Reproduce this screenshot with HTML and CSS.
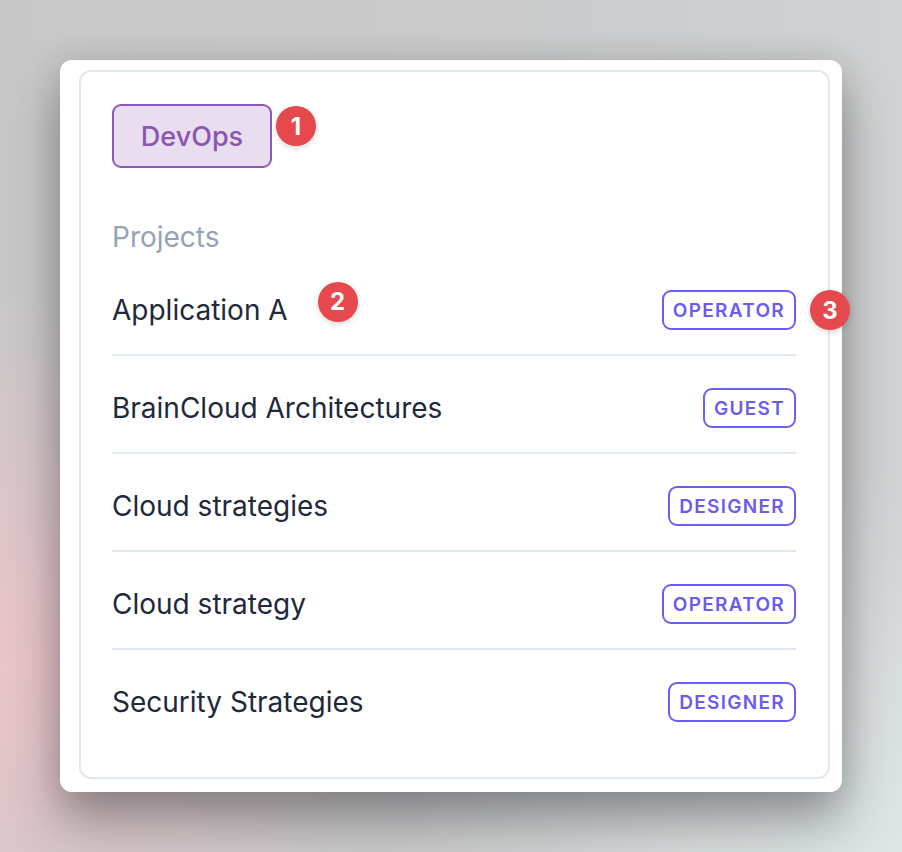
FILE: index.html
```html
<!DOCTYPE html>
<html>
<head>
<meta charset="utf-8">
<link rel="stylesheet" href="styles.css">
</head>
<body>
<div class="stage">
  <div class="card">
    <div class="panel">
      <div class="team-row">
        <span class="team">DevOps<span class="marker m1">1</span></span>
      </div>
      <div class="label">Projects</div>
      <ul class="list">
        <li class="row"><span class="name">Application A<span class="marker m2">2</span></span><span class="chip">OPERATOR<span class="marker m3">3</span></span></li>
        <li class="row"><span class="name">BrainCloud Architectures</span><span class="chip">GUEST</span></li>
        <li class="row"><span class="name">Cloud strategies</span><span class="chip">DESIGNER</span></li>
        <li class="row"><span class="name">Cloud strategy</span><span class="chip">OPERATOR</span></li>
        <li class="row"><span class="name">Security Strategies</span><span class="chip">DESIGNER</span></li>
      </ul>
    </div>
  </div>
</div>
</body>
</html>
```
FILE: styles.css
```css
* { box-sizing: border-box; }
html, body { margin: 0; height: 100%; }
body {
  font-family: Inter, "Noto Sans", sans-serif;
  background:
    radial-gradient(ellipse 420px 380px at 0% 78%, rgba(236,196,200,0.95), rgba(236,196,200,0) 100%),
    radial-gradient(ellipse 500px 380px at 100% 100%, rgba(222,230,229,1), rgba(222,230,229,0) 100%),
    linear-gradient(90deg, #c8c8c9 0%, #cacbcc 60%, #d0d2d3 100%);
  overflow: hidden;
}
.stage {
  padding: 60px 0 0 60px;
}
.card {
  width: 782px;
  height: 732px;
  background: #fff;
  border-radius: 12px;
  padding: 10px 12px 13px 19px;
  box-shadow: 0 28px 50px rgba(40,40,45,0.42), 0 0 30px rgba(40,40,45,0.12);
}
.panel {
  height: 100%;
  border: 2px solid #e2e8f0;
  border-radius: 12px;
  padding: 32px 32px 0 31px;
}
.team-row { display: flex; }
.team {
  position: relative;
  display: inline-flex;
  align-items: center;
  justify-content: center;
  width: 160px;
  height: 64px;
  background: #e9ddf0;
  border: 2px solid #8d57b7;
  border-radius: 9px;
  color: #8a55b3;
  font-size: 27px;
  font-weight: 500;
}
.marker {
  position: absolute;
  width: 40px;
  height: 40px;
  border-radius: 50%;
  background: #e5484d;
  color: #fff;
  font-size: 24px;
  font-weight: 700;
  display: flex;
  align-items: center;
  justify-content: center;
  letter-spacing: 0;
  box-shadow: 0 2px 6px rgba(0,0,0,0.15);
}
.m1 { left: calc(100% + 6px); top: 0; }
.m2 { left: calc(100% + 30px); top: -8px; }
.m3 { left: calc(100% + 16px); top: -2px; }
.label {
  margin-top: 53px;
  height: 32px;
  line-height: 32px;
  font-size: 28px;
  color: #94a3b8;
}
.list {
  list-style: none;
  margin: 5px 0 0;
  padding: 0;
}
.row {
  display: flex;
  align-items: center;
  justify-content: space-between;
  padding: 32px 0 24px;
  border-bottom: 2px solid #e2e8f0;
}
.row:last-child { border-bottom: none; }
.name {
  position: relative;
  font-size: 28px;
  color: #1e293b;
  line-height: 40px;
}
.chip {
  position: relative;
  height: 40px;
  padding: 0 9px;
  border: 2px solid #6c5ef5;
  border-radius: 9px;
  color: #6a5cf0;
  font-size: 19px;
  font-weight: 600;
  letter-spacing: 1.3px;
  display: inline-flex;
  align-items: center;
}
```
